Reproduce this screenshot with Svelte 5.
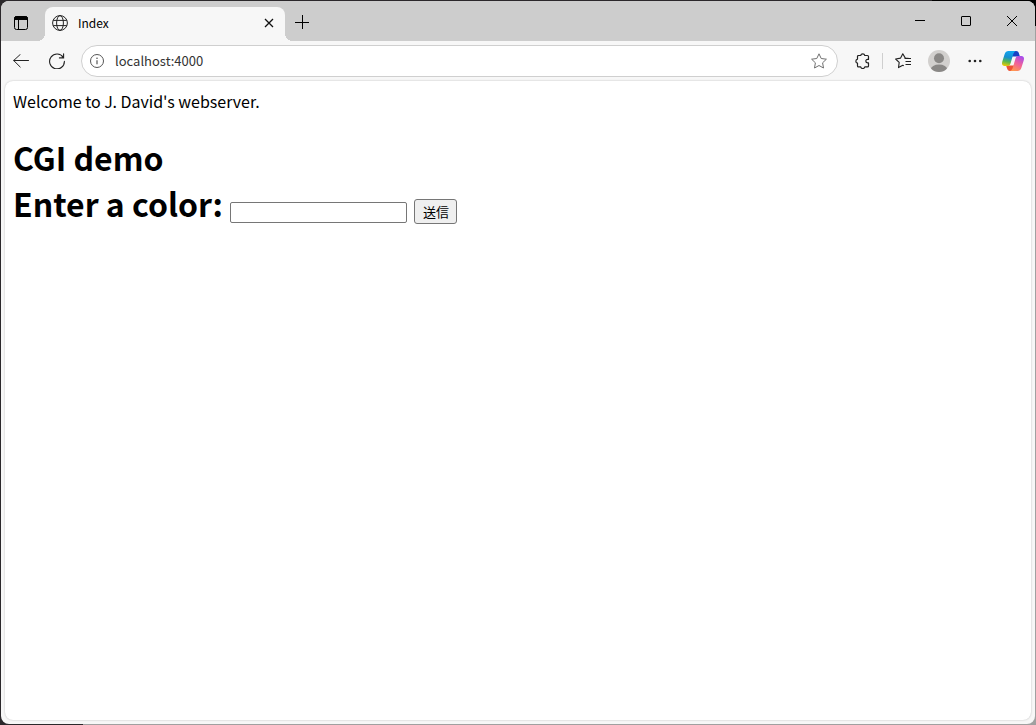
<script lang="ts">
  let address = 'localhost:4000';
  let color = '';
</script>

<div class="desktop">
  <div class="window">
    <header class="titlebar">
      <button class="tab-actions" aria-label="Tab actions">
        <svg width="16" height="16" viewBox="0 0 16 16" fill="none" stroke="#000">
          <rect x="1.5" y="1.5" width="13" height="13" rx="2" />
          <path d="M1.5 4.5v-1a2 2 0 0 1 2-2h9a2 2 0 0 1 2 2v1z" fill="#000" />
          <path d="M5.5 5v9.5" />
        </svg>
      </button>

      <div class="tab">
        <svg width="16" height="16" viewBox="0 0 16 16" fill="none" stroke="#222">
          <circle cx="8" cy="8" r="7.4" />
          <ellipse cx="8" cy="8" rx="3.4" ry="7.4" />
          <path d="M1.2 5.4h13.6M1.2 10.6h13.6" />
        </svg>
        <span class="tab-title">Index</span>
        <button class="tab-close" aria-label="Close tab">
          <svg width="10" height="10" viewBox="0 0 10 10" stroke="#111" stroke-width="1.3">
            <path d="M1 1l8 8M9 1l-8 8" />
          </svg>
        </button>
      </div>

      <button class="new-tab" aria-label="New tab">
        <svg width="14" height="14" viewBox="0 0 14 14" stroke="#000">
          <path d="M7.5 0v14M0 7.5h14" />
        </svg>
      </button>

      <div class="window-buttons">
        <button aria-label="Minimize">
          <svg width="10" height="10" viewBox="0 0 10 10" stroke="#000"><path d="M0 4.5h10" /></svg>
        </button>
        <button aria-label="Maximize">
          <svg width="10" height="10" viewBox="0 0 10 10" fill="none" stroke="#000">
            <rect x="0.5" y="0.5" width="9" height="9" rx="0.5" />
          </svg>
        </button>
        <button aria-label="Close">
          <svg width="10" height="10" viewBox="0 0 10 10" stroke="#000"><path d="M0 0l10 10M10 0L0 10" /></svg>
        </button>
      </div>
    </header>

    <nav class="toolbar">
      <button class="nav-btn" aria-label="Back">
        <svg width="16" height="14" viewBox="0 0 16 14" fill="none" stroke="#222" stroke-linecap="round">
          <path d="M15.5 6.5H.8M7.2 .5L.7 6.5l6.5 6.5" />
        </svg>
      </button>
      <button class="nav-btn" aria-label="Refresh">
        <svg width="16" height="16" viewBox="0 0 16 16" fill="none" stroke="#222" stroke-width="1.1" stroke-linecap="round">
          <path d="M14.2 4.4A7.4 7.4 0 1 0 15.4 8.4M14.6.8v4.1h-4.2" />
        </svg>
      </button>

      <div class="address-bar">
        <button class="info" aria-label="View site information">
          <svg width="14" height="14" viewBox="0 0 14 14" fill="none" stroke="#555">
            <circle cx="7" cy="7" r="6.5" />
            <path d="M7 6.2v4" stroke-width="1.2" />
            <circle cx="7" cy="4.2" r="0.8" fill="#555" stroke="none" />
          </svg>
        </button>
        <input class="address" type="text" aria-label="Address" bind:value={address} />
        <button class="favorite" aria-label="Add to favorites">
          <svg width="16" height="16" viewBox="0 0 16 16" fill="none" stroke="#707070" stroke-linejoin="round">
            <path d="M8 .8l2.2 4.7 5.2.7-3.8 3.6.9 5.2L8 12.5 3.5 15l.9-5.2L.6 6.2l5.2-.7z" />
          </svg>
        </button>
      </div>

      <button class="nav-btn extensions" aria-label="Extensions">
        <svg width="16" height="16" viewBox="0 0 16 16" fill="none" stroke="#222" stroke-width="1.2" stroke-linejoin="round">
          <path d="M4.5 2.5h2.2a2.1 2.1 0 0 1 4.1 0h2.7a1 1 0 0 1 1 1v2.9h-1a1.7 1.7 0 0 0 0 3.4h1v3.1a1 1 0 0 1-1 1h-2.7a2.1 2.1 0 0 1-4.1 0H4.5a1 1 0 0 1-1-1v-2.7a2.1 2.1 0 0 1 0-4.1V3.5a1 1 0 0 1 1-1z" />
        </svg>
      </button>
      <span class="divider"></span>
      <button class="nav-btn" aria-label="Favorites">
        <svg width="17" height="16" viewBox="0 0 17 16" fill="none" stroke="#222" stroke-width="1.1" stroke-linejoin="round">
          <path d="M14.5 5.5l-4.2-.4L7.8.8 5.6 5.1l-5 .9 3.6 3.4-.7 5.2 4.3-2.3 1 .4M9.5 5.5H16M10.5 8.5H16M10.5 11.5H16" />
        </svg>
      </button>
      <button class="nav-btn" aria-label="Profile">
        <svg width="22" height="22" viewBox="0 0 22 22">
          <clipPath id="avatar"><circle cx="11" cy="11" r="11" /></clipPath>
          <g clip-path="url(#avatar)">
            <path d="M0 0h22v22H0z" fill="#d2d0ce" />
            <circle cx="11" cy="8.2" r="5" fill="#8a8886" />
            <ellipse cx="11" cy="19.5" rx="8.2" ry="5" fill="#8a8886" />
          </g>
        </svg>
      </button>
      <button class="nav-btn" aria-label="Settings and more">
        <svg width="14" height="4" viewBox="0 0 14 4" fill="#222">
          <circle cx="1.7" cy="2" r="1.3" />
          <circle cx="7" cy="2" r="1.3" />
          <circle cx="12.3" cy="2" r="1.3" />
        </svg>
      </button>
      <button class="nav-btn copilot" aria-label="Copilot">
        <svg width="22" height="20" viewBox="0 0 22 20">
          <defs>
            <linearGradient id="cool" x1="0.4" y1="0" x2="0.2" y2="1">
              <stop offset="0" stop-color="#12a5ee" />
              <stop offset="0.4" stop-color="#168fd0" />
              <stop offset="0.7" stop-color="#5cb94c" />
              <stop offset="1" stop-color="#f6c900" />
            </linearGradient>
            <linearGradient id="warm" x1="0.8" y1="0" x2="0.3" y2="1">
              <stop offset="0" stop-color="#a44cef" />
              <stop offset="0.5" stop-color="#f0609a" />
              <stop offset="1" stop-color="#ff9850" />
            </linearGradient>
          </defs>
          <path d="M10 0h4c2 0 2.6 1.2 3.2 3.2l.7 2.3H10z" fill="#1741c4" />
          <path d="M12 20H8c-2 0-2.6-1.2-3.2-3.2l-.7-2.3H12z" fill="#ee5235" />
          <path d="M6.5 0H14c-1.6.5-2.4 2-3 4L8.6 12.2C8 14.2 7 15 5 15H2.6C.3 15-.5 13.2.3 10.5l2.3-7.3C3.4.9 4.6 0 6.5 0z" fill="url(#cool)" />
          <path d="M15.5 20H8c1.6-.5 2.4-2 3-4l2.4-8.2C14 5.8 15 5 17 5h2.4c2.3 0 3.1 1.8 2.3 4.5l-2.3 7.3c-.8 2.3-2 3.2-3.9 3.2z" fill="url(#warm)" />
        </svg>
      </button>
    </nav>

    <main class="page">
      Welcome to J. David's webserver.
      <form on:submit|preventDefault>
        <h1>
          CGI demo<br />
          <label for="color">Enter a color:</label>
          <input id="color" type="text" bind:value={color} />
          <button type="submit">送信</button>
        </h1>
      </form>
    </main>
  </div>
</div>

<style>
  :global(body) {
    margin: 0;
  }

  .desktop {
    box-sizing: border-box;
    min-height: 100vh;
    display: flex;
    padding: 1px;
    background: linear-gradient(to right, #2b282b 90%, #000 90%) top / 100% 26px no-repeat,
      linear-gradient(to right, #2b282b 8%, #a0a0a0 8%);
    font-family: "Noto Sans CJK JP", sans-serif;
  }

  .window {
    flex: 1;
    min-width: 0;
    display: flex;
    flex-direction: column;
    overflow: hidden;
    border-radius: 8px;
    background: #f7f7f7;
  }

  .titlebar button,
  .toolbar button {
    display: flex;
    align-items: center;
    justify-content: center;
    flex: none;
    padding: 0;
    border: none;
    background: none;
  }

  .titlebar {
    display: flex;
    height: 40px;
    background: #cdcdcd;
  }

  .titlebar .tab-actions {
    width: 40px;
    padding-top: 4px;
  }

  .tab {
    position: relative;
    box-sizing: border-box;
    display: flex;
    align-items: center;
    width: 240px;
    margin: 6px 0 0 4px;
    padding: 0 11px 2px 7px;
    border-radius: 8px 8px 0 0;
    background: #f7f7f7;
  }

  /* inverted corners where the tab meets the toolbar */
  .tab::before,
  .tab::after {
    content: '';
    position: absolute;
    bottom: 0;
    width: 8px;
    height: 8px;
  }

  .tab::before {
    right: 100%;
    background: radial-gradient(circle at 0 0, #cdcdcd 8px, #f7f7f7 8px);
  }

  .tab::after {
    left: 100%;
    background: radial-gradient(circle at 100% 0, #cdcdcd 8px, #f7f7f7 8px);
  }

  .tab-title {
    flex: 1;
    margin-left: 10px;
    font-size: 12px;
    line-height: 16px;
  }

  .titlebar .new-tab {
    width: 34px;
    padding-top: 2px;
  }

  .window-buttons {
    display: flex;
    margin-left: auto;
  }

  .titlebar .window-buttons button {
    width: 46px;
  }

  .toolbar {
    display: flex;
    align-items: center;
    height: 40px;
    padding-left: 2px;
  }

  .toolbar .nav-btn {
    width: 36px;
    height: 32px;
  }

  .address-bar {
    box-sizing: border-box;
    display: flex;
    align-items: center;
    flex: 1;
    min-width: 0;
    height: 32px;
    margin-left: 6px;
    padding: 0 10px 0 8px;
    border: 1px solid #cfcfcf;
    border-radius: 16px;
    background: #fff;
  }

  .address {
    flex: 1;
    min-width: 0;
    margin-left: 11px;
    padding: 0;
    border: none;
    outline: none;
    background: none;
    color: #333;
    font: 13px/20px "Noto Sans CJK JP", sans-serif;
  }

  .toolbar .extensions {
    margin-left: 6px;
  }

  .divider {
    width: 1px;
    height: 16px;
    margin: 0 2px;
    background: #cfcfcf;
  }

  .toolbar .copilot {
    width: 40px;
    margin-right: 2px;
  }

  .page {
    flex: 1;
    margin: 0 4px 4px;
    padding: 8px;
    border-radius: 8px;
    background: #fff;
    box-shadow: 0 0 2px rgba(0, 0, 0, 0.25);
    color: #000;
    font-size: 16px;
  }

  h1 {
    margin: 21px 0;
    font-size: 32px;
  }

  h1 input {
    box-sizing: border-box;
    width: 177px;
    height: 21px;
    padding: 1px 2px;
    border: 1px solid #767676;
    border-radius: 2px;
    font-size: 13px;
  }

  h1 button {
    min-width: 43px;
    height: 25px;
    padding: 1px 7px;
    border: 1px solid #767676;
    border-radius: 3px;
    background: #efefef;
    color: #000;
    font: 13px "Noto Sans CJK JP", sans-serif;
  }
</style>
